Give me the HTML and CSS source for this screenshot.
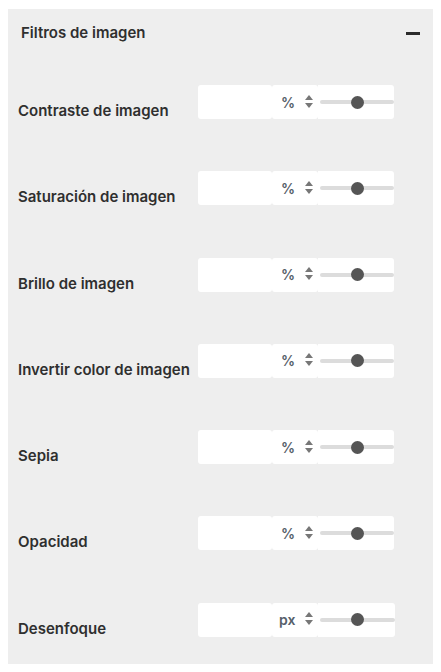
FILE: index.html
```html
<!DOCTYPE html>
<html lang="es">
<head>
<meta charset="utf-8">
<link rel="stylesheet" href="styles.css">
</head>
<body>
<div class="panel">
  <div class="header">
    <span class="title">Filtros de imagen</span>
    <span class="minus"></span>
  </div>
  <div class="rows">
    <div class="row">
      <div class="label">Contraste de imagen</div>
      <div class="control">
        <div class="field"></div>
        <div class="unit"><span class="unit-text">%</span><span class="spin"><i class="up"></i><i class="down"></i></span></div>
        <div class="slider"><div class="track"><div class="thumb"></div></div></div>
      </div>
    </div>
    <div class="row">
      <div class="label">Saturación de imagen</div>
      <div class="control">
        <div class="field"></div>
        <div class="unit"><span class="unit-text">%</span><span class="spin"><i class="up"></i><i class="down"></i></span></div>
        <div class="slider"><div class="track"><div class="thumb"></div></div></div>
      </div>
    </div>
    <div class="row">
      <div class="label">Brillo de imagen</div>
      <div class="control">
        <div class="field"></div>
        <div class="unit"><span class="unit-text">%</span><span class="spin"><i class="up"></i><i class="down"></i></span></div>
        <div class="slider"><div class="track"><div class="thumb"></div></div></div>
      </div>
    </div>
    <div class="row">
      <div class="label">Invertir color de imagen</div>
      <div class="control">
        <div class="field"></div>
        <div class="unit"><span class="unit-text">%</span><span class="spin"><i class="up"></i><i class="down"></i></span></div>
        <div class="slider"><div class="track"><div class="thumb"></div></div></div>
      </div>
    </div>
    <div class="row">
      <div class="label">Sepia</div>
      <div class="control">
        <div class="field"></div>
        <div class="unit"><span class="unit-text">%</span><span class="spin"><i class="up"></i><i class="down"></i></span></div>
        <div class="slider"><div class="track"><div class="thumb"></div></div></div>
      </div>
    </div>
    <div class="row">
      <div class="label">Opacidad</div>
      <div class="control">
        <div class="field"></div>
        <div class="unit"><span class="unit-text">%</span><span class="spin"><i class="up"></i><i class="down"></i></span></div>
        <div class="slider"><div class="track"><div class="thumb"></div></div></div>
      </div>
    </div>
    <div class="row">
      <div class="label">Desenfoque</div>
      <div class="control">
        <div class="field"></div>
        <div class="unit unit-px"><span class="unit-text">px</span><span class="spin"><i class="up"></i><i class="down"></i></span></div>
        <div class="slider slider-px"><div class="track"><div class="thumb"></div></div></div>
      </div>
    </div>
  </div>
</div>
</body>
</html>
```

FILE: styles.css
```css
html, body {
  margin: 0;
  padding: 0;
  background: #ffffff;
}

body {
  padding: 9px 8px 8px 8px;
  font-family: Inter, "Noto Sans", "Liberation Sans", sans-serif;
  color: #2f2f2f;
}

.panel {
  background: #eeeeee;
  height: 655px;
  box-sizing: border-box;
}

.header {
  display: flex;
  align-items: center;
  justify-content: space-between;
  padding: 15px 13px 0 13px;
  height: 18px;
}

.title {
  font-size: 15px;
  font-weight: 600;
  line-height: 18px;
  color: #2f2f2f;
}

.minus {
  display: block;
  width: 14px;
  height: 3px;
  background: #2b2b2b;
  margin-top: 1px;
}

.rows {
  display: flex;
  flex-direction: column;
  gap: 52.3px;
  margin-top: 43px;
  padding-left: 10px;
}

.row {
  display: flex;
  align-items: flex-end;
  height: 34px;
}

.label {
  width: 180px;
  font-size: 15px;
  font-weight: 600;
  line-height: 17px;
  color: #2f2f2f;
  white-space: nowrap;
}

.control {
  display: flex;
  height: 34px;
}

.field {
  width: 74px;
  background: #ffffff;
  border-radius: 3px;
}

.unit {
  display: flex;
  align-items: center;
  background: #ffffff;
  border-radius: 3px;
  padding: 0 5px 0 9px;
  gap: 10px;
}

.unit-px {
  padding-left: 7px;
  gap: 10px;
}

.unit-text {
  font-size: 14px;
  font-weight: 600;
  color: #56606a;
  line-height: 17px;
}

.spin {
  display: flex;
  flex-direction: column;
  gap: 3px;
  margin-top: -2px;
}

.up, .down {
  display: block;
  width: 0;
  height: 0;
  border-left: 4.5px solid transparent;
  border-right: 4.5px solid transparent;
}

.up {
  border-bottom: 5px solid #777777;
}

.down {
  border-top: 5px solid #777777;
}

.slider {
  width: 76px;
  background: #ffffff;
  border-radius: 0 3px 3px 0;
  display: flex;
  align-items: center;
}

.slider-px {
  width: 77px;
}

.track {
  position: relative;
  margin-left: 2px;
  flex: 1;
  height: 4px;
  background: #dcdcdc;
  border-radius: 2px;
}

.thumb {
  position: absolute;
  left: 50%;
  top: 50%;
  width: 13px;
  height: 13px;
  margin: -6.5px 0 0 -6.5px;
  background: #555555;
  border-radius: 50%;
}
```
